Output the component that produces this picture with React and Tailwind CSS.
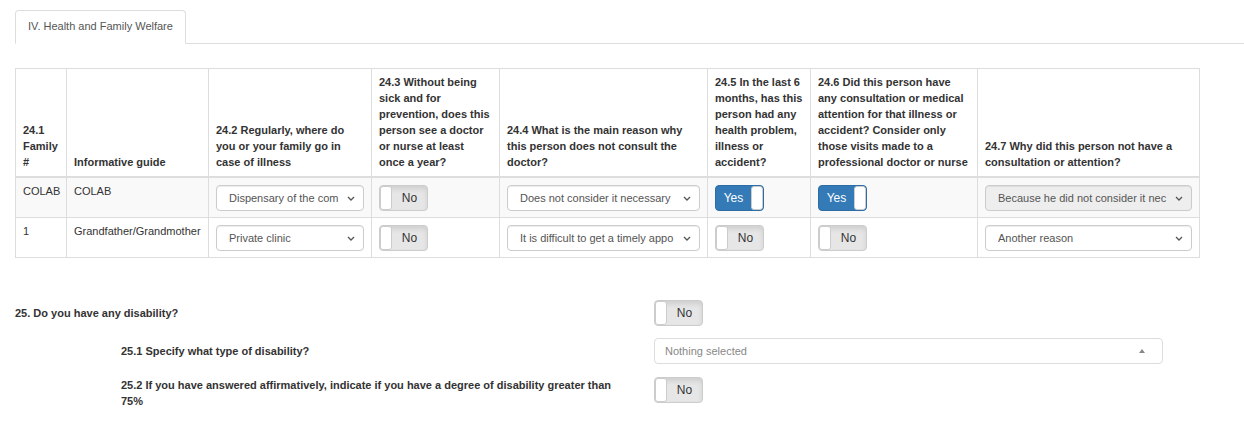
import React from 'react';

const Chevron = () => (
  <svg width="8" height="5" viewBox="0 0 8 5" className="shrink-0">
    <polyline points="1,1 4,4 7,1" fill="none" stroke="#555" strokeWidth="1.3" />
  </svg>
);

const Select = ({ value, disabled }) => (
  <div
    className={`flex h-[26px] w-full items-center rounded-[4px] border border-[#ccc] pl-[12px] pr-[8px] shadow-[inset_0_1px_1px_rgba(0,0,0,0.075)] ${disabled ? 'bg-[#eee]' : 'bg-white'}`}
  >
    <span className="flex-1 overflow-hidden whitespace-nowrap text-[#555]">{value}</span>
    <Chevron />
  </div>
);

const Toggle = ({ on }) =>
  on ? (
    <div className="flex h-[26px] w-[49px] overflow-hidden rounded-[4px] border border-[#2e6da4] bg-[#337ab7]">
      <div className="flex flex-1 items-center justify-center text-[12px] text-white">Yes</div>
      <div className="w-[12px] rounded-[3px] border border-[#ccc] bg-white" />
    </div>
  ) : (
    <div className="flex h-[26px] w-[49px] overflow-hidden rounded-[4px] border border-[#ccc] bg-[#e6e6e6] shadow-[inset_0_3px_5px_rgba(0,0,0,0.1)]">
      <div className="w-[12px] rounded-[3px] border border-[#ccc] bg-white" />
      <div className="flex flex-1 items-center justify-center text-[12px] text-[#333]">No</div>
    </div>
  );

const headers = [
  ['24.1 Family #', 51],
  ['Informative guide', 142],
  ['24.2 Regularly, where do you or your family go in case of illness', 163],
  ['24.3 Without being sick and for prevention, does this person see a doctor or nurse at least once a year?', 128],
  ['24.4 What is the main reason why this person does not consult the doctor?', 208],
  ['24.5 In the last 6 months, has this person had any health problem, illness or accident?', 103],
  ['24.6 Did this person have any consultation or medical attention for that illness or accident? Consider only those visits made to a professional doctor or nurse', 167],
  ['24.7 Why did this person not have a consultation or attention?', 222],
];

const rows = [
  {
    family: 'COLAB',
    guide: 'COLAB',
    place: 'Dispensary of the com',
    prevention: false,
    reason: 'Does not consider it necessary',
    problem: true,
    consult: true,
    why: 'Because he did not consider it nec',
    whyDisabled: true,
  },
  {
    family: '1',
    guide: 'Grandfather/Grandmother',
    place: 'Private clinic',
    prevention: false,
    reason: 'It is difficult to get a timely appo',
    problem: false,
    consult: false,
    why: 'Another reason',
    whyDisabled: false,
  },
];

const td = 'border border-[#ddd] px-[7px] pt-[7px] pb-[6px] align-top';

export default function App() {
  return (
    <div className="min-h-[438px] w-[1244px] bg-white pt-[10px] pl-[15px] text-[11px] text-[#333] font-['Liberation_Sans',Arial,sans-serif]">
      {/* tabs */}
      <div className="flex border-b border-[#ddd]">
        <div className="-mb-px h-[34px] rounded-t-[4px] border border-[#ddd] border-b-white bg-white px-[12px] pt-[7px] leading-4 text-[#555]">
          IV. Health and Family Welfare
        </div>
      </div>

      <table className="mt-[24px] w-[1184px] table-fixed border-collapse">
        <colgroup>
          {headers.map(([, w], i) => (
            <col key={i} style={{ width: w }} />
          ))}
        </colgroup>
        <thead>
          <tr>
            {headers.map(([label], i) => (
              <th
                key={i}
                className="border border-b-2 border-[#ddd] px-[7px] pt-[5px] pb-[6px] text-left align-bottom font-bold leading-4"
              >
                {label}
              </th>
            ))}
          </tr>
        </thead>
        <tbody>
          {rows.map((r, i) => (
            <tr key={i} className={i === 0 ? 'bg-[#f9f9f9]' : 'bg-white'}>
              <td className={`${td} leading-3`}>{r.family}</td>
              <td className={`${td} leading-3`}>{r.guide}</td>
              <td className={td}><Select value={r.place} /></td>
              <td className={td}><Toggle on={r.prevention} /></td>
              <td className={td}><Select value={r.reason} /></td>
              <td className={td}><Toggle on={r.problem} /></td>
              <td className={td}><Toggle on={r.consult} /></td>
              <td className={td}><Select value={r.why} disabled={r.whyDisabled} /></td>
            </tr>
          ))}
        </tbody>
      </table>

      {/* disability questions */}
      <div className="mt-[42px] flex flex-col gap-[12px]">
        <div className="flex items-center">
          <div className="w-[639px] font-bold leading-4">25. Do you have any disability?</div>
          <Toggle on={false} />
        </div>
        <div className="flex items-center">
          <div className="w-[639px] pl-[106px] font-bold leading-4">25.1 Specify what type of disability?</div>
          <div className="flex h-[26px] w-[509px] items-center rounded-[4px] border border-[#ddd] bg-white pl-[10px] pr-[17px] text-[#888]">
            <span className="flex-1">Nothing selected</span>
            <svg width="6" height="4" viewBox="0 0 6 4">
              <polygon points="0,4 3,0 6,4" fill="#888" />
            </svg>
          </div>
        </div>
        <div className="mt-px flex items-start">
          <div className="w-[639px] pl-[106px]">
            <div className="w-[510px] font-bold leading-4">
              25.2 If you have answered affirmatively, indicate if you have a degree of disability greater than 75%
            </div>
          </div>
          <Toggle on={false} />
        </div>
      </div>
    </div>
  );
}
